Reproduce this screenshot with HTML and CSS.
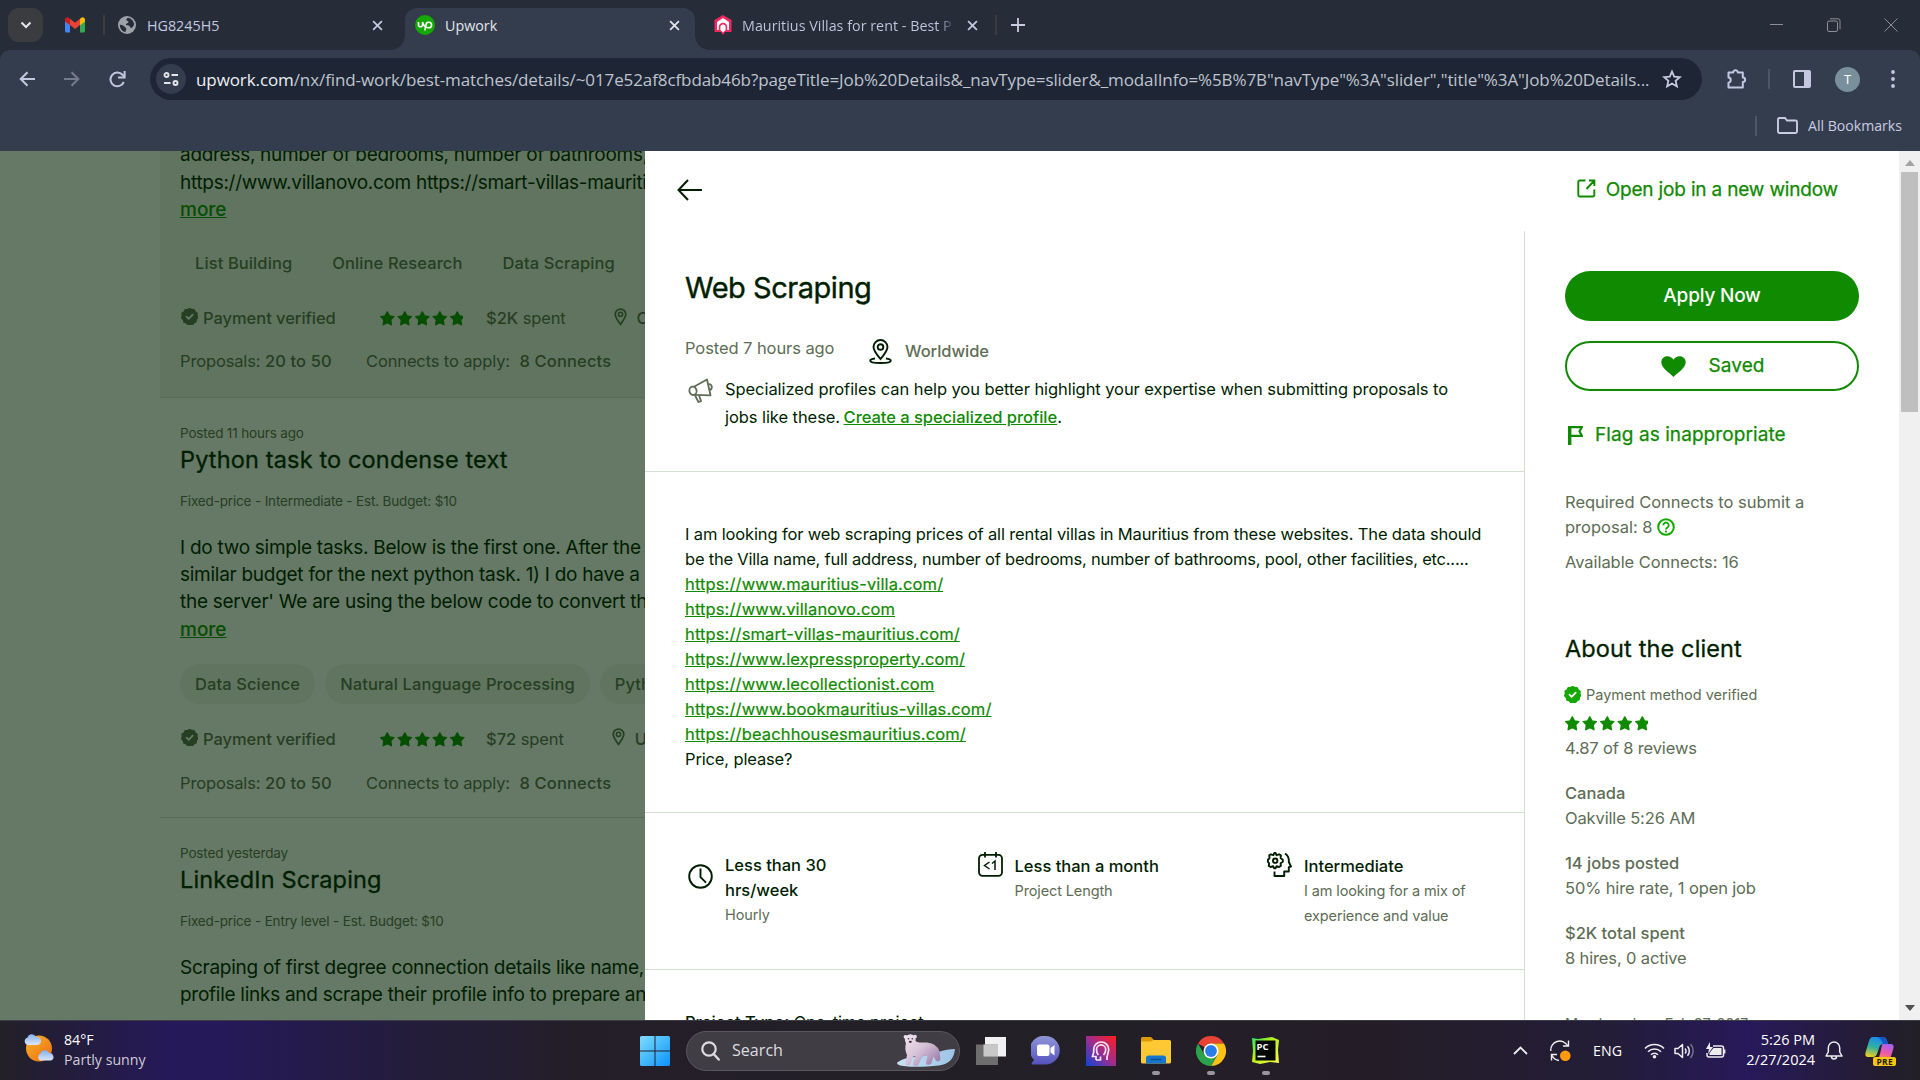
FILE: index.html
```html
<!DOCTYPE html>
<html lang="en">
<head>
<meta charset="utf-8">
<title>Upwork</title>
<link rel="stylesheet" href="styles.css">
</head>
<body>
<svg class="defs" width="0" height="0" aria-hidden="true">
  <symbol id="close" viewBox="0 0 10 10"><path d="M1 1l8 8M9 1l-8 8" fill="none" stroke="currentColor" stroke-width="1.6"/></symbol>
  <symbol id="stars" viewBox="0 0 85 15">
    <g fill="currentColor" stroke="currentColor" stroke-width="1.4" stroke-linejoin="round">
      <path id="star" d="M7.300.9l2.100 4 4.500.7-3.200 3.200.7 4.900-4.100-2-4.100 2 .7-4.900L.7 5.600l4.500-.7z"/>
      <use href="#star" x="17.500"/><use href="#star" x="35"/><use href="#star" x="52.500"/><use href="#star" x="70"/>
    </g>
  </symbol>
  <symbol id="badge" viewBox="0 0 16 16">
    <path d="M8 .4l2 1 2.300.1 1 2 1.900 1.400-.2 2.200.7 1.900-1.300 1.700-.2 2.300-2 .9-1.300 1.700-2.300-.2-2 .3-1.600-1.600-2.200-.7-.5-2.200L.6 9.300l.6-2.200-.2-2.300 2-1.300 1-2 2.300 0z" fill="currentColor" stroke="currentColor" stroke-width="1.200" stroke-linejoin="round"/>
    <path class="tick" d="M5.200 8.200l2 2 3.800-4" fill="none" stroke-width="1.700" stroke-linecap="round" stroke-linejoin="round"/>
  </symbol>
  <symbol id="pin" viewBox="0 0 12 17"><path d="M6 1a5 5 0 0 1 5 5c0 3-2.800 6.500-5 9.500C3.800 12.500 1 9 1 6a5 5 0 0 1 5-5z" fill="none" stroke="currentColor" stroke-width="1.600"/><circle cx="6" cy="6" r="2" fill="none" stroke="currentColor" stroke-width="1.500"/></symbol>
</svg>

<header class="browser">
  <div class="tabstrip">
    <button class="tab-search"><svg width="12" height="8" viewBox="0 0 12 8"><path d="M1.500 1.500L6 6l4.500-4.500" fill="none" stroke="#e3e5ea" stroke-width="2"/></svg></button>
    <svg class="gmail" width="20" height="16" viewBox="0 0 20 16"><path d="M0 3v11a1.500 1.500 0 0 0 1.500 1.500H5V7z" fill="#4285f4"/><path d="M20 3v11a1.500 1.500 0 0 1-1.500 1.500H15V7z" fill="#34a853"/><path d="M0 3.500V2.500A2.300 2.300 0 0 1 4 1l1 .8v6.500L0 4.500z" fill="#c5221f"/><path d="M20 3.500V2.500A2.300 2.300 0 0 0 16 1l-1 .8v6.500l5-3.800z" fill="#fbbc04"/><path d="M5 1.800l5 3.900 5-3.900v6.300l-5 3.900-5-3.900z" fill="#ea4335"/></svg>
    <span class="strip-sep first"></span>
    <div class="tab tab-plain">
      <svg width="18" height="18" viewBox="0 0 18 18"><circle cx="9" cy="9" r="9" fill="#9ea2a8"/><path d="M10 1.700c-1 .8-2 1-1.500 2.300s2 .5 2 2-2.500 1-2.500 2.500 2.500.5 3.500 1.500.5 2 1.500 2 2.500-1.500 3-3a7 7 0 0 0-6-7.300zM1.800 8.500c2 1 3.500.5 4.500 2s2.200 1 2 2.500-1 1.500-.8 3.200A7.300 7.300 0 0 1 1.800 8.500z" fill="#262c38"/></svg>
      <span class="tab-title">HG8245H5</span><svg class="x" width="11" height="11"><use href="#close"/></svg>
    </div>
    <div class="tab tab-active">
      <svg width="20" height="20" viewBox="0 0 20 20"><circle cx="10" cy="10" r="10" fill="#14a800"/><path d="M3.500 7v2.800a2 2 0 0 0 4 0V7M7.500 7c.8 2.800 2 4.500 3.300 5.200M9.800 15.500l1.200-5.700a2.800 2.800 0 1 1 2.700 3c-1 0-2-.4-2.800-1" fill="none" stroke="#fff" stroke-width="1.600"/></svg>
      <span class="tab-title">Upwork</span><svg class="x" width="11" height="11"><use href="#close"/></svg>
    </div>
    <div class="tab tab-last">
      <svg width="18" height="20" viewBox="0 0 18 20"><path d="M9 0l8.500 5V17H11l-2 3-2-3H.5V5z" fill="#f2275d"/><path d="M3 15V7l6-4 6 4v8h-1.800v-3a4.200 4.200 0 0 0-8.400 0v3z" fill="#fff"/><path d="M6.400 15v-3a2.600 2.600 0 0 1 5.200 0V15L9 17.500z" fill="#fff"/></svg>
      <span class="tab-title fade">Mauritius Villas for rent - Best P</span><svg class="x" width="11" height="11"><use href="#close"/></svg>
    </div>
    <span class="strip-sep last"></span>
    <svg class="plus" width="14" height="14" viewBox="0 0 14 14"><path d="M7 0v14M0 7h14" stroke="#c9cce0" stroke-width="1.800"/></svg>
    <div class="win-buttons">
      <svg width="14" height="14" viewBox="0 0 14 14"><path d="M0 6.500h13" stroke="#8b8f98"/></svg>
      <svg width="14" height="14" viewBox="0 0 14 14"><rect x=".5" y="3" width="10" height="10.500" rx="1.500" fill="none" stroke="#8b8f98"/><path d="M3 .8h8a2 2 0 0 1 2 2v8.500" fill="none" stroke="#8b8f98"/></svg>
      <svg width="14" height="14" viewBox="0 0 14 14"><path d="M.5.5l13 13M13.500.5l-13 13" stroke="#8b8f98"/></svg>
    </div>
  </div>

  <div class="toolbar">
    <svg class="nav-back" width="17" height="16" viewBox="0 0 17 16"><path d="M16 8H2M8.500 1.200L1.700 8l6.800 6.800" fill="none" stroke="#c3c8e0" stroke-width="2"/></svg>
    <svg class="nav-fwd" width="17" height="16" viewBox="0 0 17 16"><path d="M1 8h14M8.500 1.200L15.300 8l-6.800 6.800" fill="none" stroke="#747b8b" stroke-width="2"/></svg>
    <svg class="nav-reload" width="17" height="17" viewBox="0 0 17 17"><path d="M14.800 11A6.900 6.900 0 1 1 13.500 3.700L15.500 6" fill="none" stroke="#c3c8e0" stroke-width="2"/><path d="M15.600 0v6.600H9" fill="none" stroke="#c3c8e0" stroke-width="2"/></svg>
    <div class="omnibox">
      <span class="site-info"><svg width="16" height="14" viewBox="0 0 16 14"><g fill="none" stroke="#e3e5ea" stroke-width="1.900"><circle cx="3.500" cy="3" r="2"/><path d="M8.500 3H15M1 11h6.500"/><circle cx="12.500" cy="11" r="2"/></g></svg></span>
      <span class="url"><b>upwork.com</b>/nx/find-work/best-matches/details/~017e52af8cfbdab46b?pageTitle=Job%20Details&amp;_navType=slider&amp;_modalInfo=%5B%7B"navType"%3A"slider","title"%3A"Job%20Details...</span>
      <svg width="20" height="20" viewBox="0 0 20 20"><path d="M10 2.500l2.200 5.200 5.600.5-4.200 3.700 1.300 5.500-4.900-2.900-4.900 2.900 1.300-5.500L2.200 8.200l5.600-.5z" fill="none" stroke="#c9cce0" stroke-width="1.800"/></svg>
    </div>
    <svg class="ext" width="22" height="22" viewBox="0 0 22 22"><path d="M2.500 4.500h4.700a2.300 2.300 0 1 1 4.600 0h5v5a2.300 2.300 0 0 1 0 4.600v5.400h-14.300v-4.800c3-.2 3-5 0-5.200z" fill="none" stroke="#c3c8e0" stroke-width="2" stroke-linejoin="round"/></svg>
    <span class="tool-sep"></span>
    <svg class="panel-icon" width="18" height="18" viewBox="0 0 18 18"><rect x="1" y="1" width="16" height="16" rx="1" fill="none" stroke="#c3c8e0" stroke-width="2"/><path d="M11 1h6v16h-6z" fill="#c3c8e0"/></svg>
    <span class="avatar">T</span>
    <svg class="menu" width="4" height="18" viewBox="0 0 4 18"><g fill="#c3c8e0"><circle cx="2" cy="2" r="1.900"/><circle cx="2" cy="9" r="1.900"/><circle cx="2" cy="16" r="1.900"/></g></svg>
  </div>
  <div class="bookmarks">
    <span class="bm-sep"></span>
    <svg width="21" height="17" viewBox="0 0 21 17"><path d="M1 14.500V2.500A1.500 1.500 0 0 1 2.500 1H8l2 2.500h8.500A1.500 1.500 0 0 1 20 5v9.500a1.500 1.500 0 0 1-1.500 1.500h-16A1.500 1.500 0 0 1 1 14.500z" fill="none" stroke="#c9cce0" stroke-width="1.900"/></svg>
    <span>All Bookmarks</span>
  </div>
</header>

<div class="page">
  <section class="feed">
    <article class="job job-hover">
      <p class="job-text">address, number of bedrooms, number of bathrooms,<br>https://www.villanovo.com https://smart-villas-mauriti<br><a>more</a></p>
      <div class="tags"><span class="tag">List Building</span><span class="tag">Online Research</span><span class="tag">Data Scraping</span></div>
      <div class="client-row">
        <svg class="verified" width="17" height="17"><use href="#badge"/></svg><b class="pay">Payment verified</b>
        <span class="stars partial"><svg width="85" height="15"><use href="#stars"/></svg></span>
        <span class="spent"><b>$2K</b> spent</span>
        <svg class="pin" width="13" height="18"><use href="#pin"/></svg><b>C</b>
      </div>
      <div class="proposal-row"><span class="props">Proposals: <b>20 to 50</b></span><span>Connects to apply: <b class="conn">8 Connects</b></span></div>
    </article>
    <article class="job">
      <p class="posted">Posted 11 hours ago</p>
      <h2>Python task to condense text</h2>
      <p class="terms">Fixed-price - Intermediate - Est. Budget: $10</p>
      <p class="job-text">I do two simple tasks. Below is the first one. After the<br>similar budget for the next python task. 1) I do have a l<br>the server' We are using the below code to convert th<br><a>more</a></p>
      <div class="tags"><span class="tag">Data Science</span><span class="tag">Natural Language Processing</span><span class="tag">Python</span></div>
      <div class="client-row">
        <svg class="verified" width="17" height="17"><use href="#badge"/></svg><b class="pay">Payment verified</b>
        <span class="stars"><svg width="85" height="15"><use href="#stars"/></svg></span>
        <span class="spent"><b>$72</b> spent</span>
        <svg class="pin" width="13" height="18"><use href="#pin"/></svg><b>U</b>
      </div>
      <div class="proposal-row"><span class="props">Proposals: <b>20 to 50</b></span><span>Connects to apply: <b class="conn">8 Connects</b></span></div>
    </article>
    <article class="job">
      <p class="posted">Posted yesterday</p>
      <h2>LinkedIn Scraping</h2>
      <p class="terms">Fixed-price - Entry level - Est. Budget: $10</p>
      <p class="job-text">Scraping of first degree connection details like name,<br>profile links and scrape their profile info to prepare an</p>
    </article>
  </section>

  <section class="slider">
    <div class="slider-head">
      <svg class="back" width="25" height="22" viewBox="0 0 25 22"><path d="M25 11H1.500M11 1L1.500 11l9.500 10" fill="none" stroke="#001e00" stroke-width="2"/></svg>
      <a class="open-job"><svg width="19" height="19" viewBox="0 0 19 19"><path d="M8.500 1.500H2.500a1.200 1.200 0 0 0-1.200 1.200v13.600a1.200 1.200 0 0 0 1.200 1.200h13.600a1.200 1.200 0 0 0 1.200-1.200V10.500M12 1.500h5.400v5.600M17.400 1.500L9.500 10" fill="none" stroke="currentColor" stroke-width="1.900"/></svg>Open job in a new window</a>
    </div>
    <div class="slider-body">
      <main>
        <div class="sec sec-title">
          <h1>Web Scraping</h1>
          <div class="meta">
            <span class="ago">Posted 7 hours ago</span>
            <svg width="23" height="25" viewBox="0 0 23 25"><g fill="none" stroke="#001e00" stroke-width="1.900"><path d="M11.500 1a7 7 0 0 1 7 7c0 4-4.200 8.500-7 12-2.800-3.500-7-8-7-12a7 7 0 0 1 7-7z"/><circle cx="11.500" cy="8" r="2.800"/><path d="M6 19.500c-3 .4-4.800 1.200-4.800 2.200 0 1.500 4.300 2.300 10.300 2.300s10.300-.8 10.300-2.300c0-1-1.800-1.800-4.800-2.200"/></g></svg>
            <b>Worldwide</b>
          </div>
          <div class="notice">
            <svg width="25" height="25" viewBox="0 0 25 25"><g fill="none" stroke="#5e6d55" stroke-width="1.800" stroke-linejoin="round"><path d="M5.500 9L19 1.500l3.500 15.800-15.200-.5"/><ellipse cx="5" cy="12.800" rx="3.600" ry="4.200" transform="rotate(-12 5 12.800)"/><path d="M20.300 6.200c3.500-1.200 5 4.600 1.500 5.600M6.800 17l3.700 7 2.500-.9-2-5.800"/></g></svg>
            <p>Specialized profiles can help you better highlight your expertise when submitting proposals to<br>jobs like these. <a>Create a specialized profile</a>.</p>
          </div>
        </div>
        <div class="sec sec-desc">
          <p>I am looking for web scraping prices of all rental villas in Mauritius from these websites. The data should<br><span class="tight">be the Villa name, full address, number of bedrooms, number of bathrooms, pool, other facilities, etc.....</span><br><a>https://www.mauritius-villa.com/</a><br><a>https://www.villanovo.com</a><br><a>https://smart-villas-mauritius.com/</a><br><a>https://www.lexpressproperty.com/</a><br><a>https://www.lecollectionist.com</a><br><a>https://www.bookmauritius-villas.com/</a><br><a>https://beachhousesmauritius.com/</a><br>Price, please?</p>
        </div>
        <div class="sec sec-features">
          <div class="feature low">
            <svg width="25" height="25" viewBox="0 0 25 25"><circle cx="12.500" cy="12.500" r="11.300" fill="none" stroke="#001e00" stroke-width="1.900"/><path d="M12.500 4.500v8.700l5.500 5.500" fill="none" stroke="#001e00" stroke-width="1.900"/></svg>
            <div><b>Less than 30<br>hrs/week</b><small>Hourly</small></div>
          </div>
          <div class="feature">
            <svg width="25" height="25" viewBox="0 0 25 25"><g fill="none" stroke="#001e00" stroke-width="1.800"><rect x="1" y="2.800" width="23" height="21" rx="3.500"/><path d="M7 0v5.500M18 0v5.500"/><path d="M11.500 10L6.500 13.500l5 3.500M14 11.500l3-2.500v9" stroke-width="1.500"/></g></svg>
            <div><b>Less than a month</b><small>Project Length</small></div>
          </div>
          <div class="feature">
            <svg width="25" height="25" viewBox="0 0 25 25"><g fill="none" stroke="#001e00" stroke-width="1.900" stroke-linejoin="round"><path d="M8.500 1l1 2.200 2.500-.9 1.900 1.100-.3 2.600 2.200 1.700v2l-2.200 1.600.3 2.600-1.900 1.100-2.500-.9-1 2.200H7.200l-1-2.200-2.500.9-1.900-1.100.3-2.600L.9 9.700v-2l1.700-1.600-.4-2.700L4 2.300l2.400.9L7.300 1z"/><circle cx="8.200" cy="8.700" r="2.200"/><path d="M18 1.500c3 2 4.200 5 3.800 8.500l2.200 4.500-2.200.7v4.300h-4.600V24H7.500v-4.500"/></g></svg>
            <div><b>Intermediate</b><small>I am looking for a mix of<br>experience and value</small></div>
          </div>
        </div>
        <div class="sec sec-type"><b>Project Type:</b> One-time project</div>
      </main>
      <aside>
        <button class="btn btn-apply">Apply Now</button>
        <button class="btn btn-saved"><svg width="25" height="21" viewBox="0 0 25 21"><path d="M12.500 21C9 17 .3 12.500.3 6.300.3 2.500 3 .2 6.300.2c2.600 0 4.900 1.300 6.200 3.600C13.800 1.500 16.100.2 18.700.2c3.300 0 6 2.300 6 6.100C24.700 12.500 16 17 12.500 21z" fill="#108a00"/></svg>Saved</button>
        <a class="flag"><svg width="15" height="19" viewBox="0 0 15 19"><path d="M1.700 19V0" stroke="currentColor" stroke-width="3.400"/><path d="M1 1.200h12.800l-2.300 4.100L13.800 9.800H1" fill="none" stroke="currentColor" stroke-width="2.200"/></svg>Flag as inappropriate</a>
        <p class="required">Required Connects to submit a<br>proposal: 8 <svg width="18" height="18" viewBox="0 0 18 18"><circle cx="9" cy="9" r="7.800" fill="none" stroke="#14a800" stroke-width="2"/><path d="M6.300 7.300a2.700 2.700 0 1 1 4.200 2.200c-.9.600-1.500 1-1.500 2" fill="none" stroke="#14a800" stroke-width="1.800"/><circle cx="9" cy="13.600" r="1.100" fill="#14a800"/></svg></p>
        <p class="available">Available Connects: 16</p>
        <h3>About the client</h3>
        <div class="method"><svg width="17" height="17"><use href="#badge"/></svg>Payment method verified</div>
        <span class="stars partial"><svg width="85" height="15"><use href="#stars"/></svg></span>
        <p class="reviews">4.87 of 8 reviews</p>
        <p class="stat"><b>Canada</b><br>Oakville 5:26 AM</p>
        <p class="stat"><b>14 jobs posted</b><br>50% hire rate, 1 open job</p>
        <p class="stat"><b>$2K total spent</b><br>8 hires, 0 active</p>
        <p class="since">Member since Feb 27, 2017</p>
      </aside>
    </div>
  </section>
  <div class="scrollbar"><i class="up"></i><i class="thumb"></i><i class="down"></i></div>
</div>

<footer class="taskbar">
  <div class="weather">
    <svg width="32" height="30" viewBox="0 0 32 30"><defs><linearGradient id="sun" x1="0" y1="0" x2="1" y2="1"><stop offset="0" stop-color="#f7b526"/><stop offset="1" stop-color="#ee6a12"/></linearGradient><linearGradient id="cloud" x1="0" y1="0" x2="0" y2="1"><stop offset="0" stop-color="#84b0f4"/><stop offset="1" stop-color="#dbe6fa"/></linearGradient></defs><circle cx="16" cy="15.500" r="13" fill="url(#sun)"/><path d="M4 12a4 4 0 0 1 .5-7.500A4.500 4.500 0 0 1 13 4a4 4 0 0 1 2 8z" fill="url(#cloud)"/><path d="M17 27.500a4 4 0 0 1 .5-7 4.500 4.500 0 0 1 8.500-.3 3.800 3.800 0 0 1 2 7.300z" fill="url(#cloud)"/></svg>
    <div><span>84°F</span><span class="dim">Partly sunny</span></div>
  </div>
  <svg class="start" width="30" height="30" viewBox="0 0 30 30"><defs><linearGradient id="win" x1="0" y1="0" x2="1" y2="1"><stop offset="0" stop-color="#7edcff"/><stop offset="1" stop-color="#0a94f8"/></linearGradient></defs><path d="M1.500 0h13v14.500H0v-13A1.500 1.500 0 0 1 1.500 0zM15.500 0h13A1.500 1.500 0 0 1 30 1.500v13H15.500zM0 15.500h14.500V30h-13A1.500 1.500 0 0 1 0 28.500zM15.500 15.500H30v13a1.500 1.500 0 0 1-1.500 1.500h-13z" fill="url(#win)"/></svg>
  <div class="search">
    <svg width="19" height="20" viewBox="0 0 19 20"><circle cx="8" cy="8" r="6.700" fill="none" stroke="#dcdce0" stroke-width="2.200"/><path d="M12.700 13l5 5.500" stroke="#dcdce0" stroke-width="2.400" stroke-linecap="round"/></svg>
    <span>Search</span>
    <svg class="bear" width="60" height="34" viewBox="0 0 60 34"><defs><linearGradient id="ice" x1="0" y1="0" x2="1" y2="0"><stop offset="0" stop-color="#c8e2f4"/><stop offset="1" stop-color="#9cc4e6"/></linearGradient><linearGradient id="fur" gradientUnits="userSpaceOnUse" x1="8" y1="0" x2="38" y2="32"><stop offset="0" stop-color="#f3e6ee"/><stop offset=".5" stop-color="#d6c2d8"/><stop offset="1" stop-color="#9a7ba8"/></linearGradient></defs><path d="M1 28c5-4 15-5 26-6 12-3 20-7 31-7-1 10-6 15-16 16.500-14 1.500-34 2-40-.5-2-.8-2.500-2-1-3z" fill="url(#ice)"/><g fill="url(#fur)"><circle cx="8.500" cy="2.800" r="1.900"/><circle cx="18" cy="2.600" r="1.900"/><ellipse cx="13.300" cy="5.800" rx="5.400" ry="5.600"/><path d="M9 9c-1 4-1 8 1 12l-1.500 8.500c-.3 2.500 5 2.500 5.500 0L15.500 23l3-1-2.500 8c-.5 2.500 5 2.500 5.700.3L25.500 22l5-.3-1.500 7.500c0 2.200 5 2.200 5.500-.2l2-6.500 2.500 4c1 1.500 4.500.8 4.300-1.500-.2-3.500 0-7-2-10.500-3-4.500-9-6.500-15-6-3 .3-5.500 0-8-1.500z"/></g><g fill="#3b2c40"><circle cx="11.500" cy="4.700" r=".8"/><circle cx="15.300" cy="4.700" r=".8"/><ellipse cx="13.300" cy="7.800" rx="1.500" ry="1.100"/></g></svg>
  </div>
  <div class="apps">
    <div class="app"><svg width="30" height="28" viewBox="0 0 30 28"><path d="M9 0h21v19.500H9z" fill="#f1f1f1"/><path d="M0 7.500h22V28H0z" fill="#777" opacity=".9"/><path d="M7.500 7.500H22v12H7.500z" fill="#c8c8c8"/></svg></div>
    <div class="app"><svg width="29" height="29" viewBox="0 0 29 29"><defs><linearGradient id="chat" x1="0" y1="0" x2="0" y2="1"><stop offset="0" stop-color="#8f95d6"/><stop offset="1" stop-color="#5552c0"/></linearGradient></defs><path d="M14.500 0a14 14 0 0 1 0 28.500H1.500c-1.500 0-1-1.500 0-2.500l1.500-2A14 14 0 0 1 14.500 0z" fill="url(#chat)"/><rect x="6" y="8.500" width="12.500" height="11.500" rx="2" fill="#fff"/><path d="M19.500 12l4-3v10.500l-4-3z" fill="#fff"/></svg></div>
    <div class="app"><svg width="30" height="30" viewBox="0 0 30 30"><defs><linearGradient id="head" x1="0" y1="1" x2="1" y2="0"><stop offset="0" stop-color="#0a46d8"/><stop offset=".5" stop-color="#a02c8c"/><stop offset="1" stop-color="#ff1e1e"/></linearGradient></defs><path d="M0 0h30v30H0z" fill="url(#head)"/><g fill="none" stroke="#f8e4f4" stroke-width="1.700"><path d="M10 24h4.500v-3.500M10 24v-3.500H6.500l1.200-4v-3a7.500 7.500 0 0 1 15 0c0 3.500-2.200 5-1.700 10.500"/><path d="M12.300 19c-1.300-1.500-1.800-3-1.800-5.500a4.600 4.600 0 0 1 9.200 0c0 2.500-.7 4-2.200 5.500"/></g></svg></div>
    <div class="app running"><svg width="30" height="27" viewBox="0 0 30 27"><path d="M0 1.500A1.500 1.500 0 0 1 1.500 0h8.500l3.500 3.500H28A2 2 0 0 1 30 5.500V10H0z" fill="#dd9a06"/><path d="M0 4.500h10l2.500-1.500H28.500A1.500 1.500 0 0 1 30 4.500v20.500a1.500 1.500 0 0 1-1.500 1.500h-27A1.500 1.500 0 0 1 0 25z" fill="#fcc934"/><path d="M5 26.500V21a2.500 2.500 0 0 1 2.500-2.500h15A2.500 2.500 0 0 1 25 21v5.500z" fill="#1377cf"/><path d="M9.500 22.500h11" stroke="#0c4f93" stroke-width="1.500"/></svg></div>
    <div class="app running"><svg width="30" height="30" viewBox="0 0 30 30"><path d="M15 15L2 7.500A15 15 0 0 1 28 7.500H15z" fill="#ea4335"/><path d="M15 7.500h13A15 15 0 0 1 15 30l6.500-11.300z" fill="#fbc116"/><path d="M2 7.500A15 15 0 0 0 15 30l6.500-11.300H8.500z" fill="#2ba24c"/><circle cx="15" cy="15" r="7.500" fill="#fff"/><circle cx="15" cy="15" r="5.900" fill="#2a7de9"/></svg></div>
    <div class="app running"><svg width="27" height="27" viewBox="0 0 27 27"><defs><linearGradient id="pc" x1="0" y1="0" x2="1" y2="1"><stop offset="0" stop-color="#21e56d"/><stop offset=".4" stop-color="#b6f01c"/><stop offset="1" stop-color="#fcf84a"/></linearGradient></defs><path d="M0 1l6 1L20 0l7 3-1 10 1 13-9-1-10 2-8-2 1-11z" fill="url(#pc)"/><path d="M3.500 3.500h20v20h-20z" fill="#040804"/><path d="M5.500 19.500h8" stroke="#fff" stroke-width="1.600"/><text x="4.500" y="13" class="pc-label">PC</text></svg></div>
  </div>
  <div class="tray">
    <svg class="t-chev" width="15" height="9" viewBox="0 0 15 9"><path d="M1 8l6.500-6.500L14 8" fill="none" stroke="#eee" stroke-width="1.800"/></svg>
    <svg class="t-sync" width="21" height="22" viewBox="0 0 21 22"><path d="M.8 11A9 9 0 0 1 17.500 5.500M18.500.5v5.500h-5.500M9 20.500A9 9 0 0 1 2 15.500M1.500 20.500v-6h5.500" fill="none" stroke="#eee" stroke-width="1.400"/><circle cx="15.300" cy="15.800" r="5.300" fill="#ff9a0a"/></svg>
    <span class="t-lang">ENG</span>
    <svg class="t-wifi" width="21" height="16" viewBox="0 0 21 16"><g fill="none" stroke="#eee" stroke-width="1.600"><path d="M1 5.500a13.400 13.400 0 0 1 19 0M4 8.700a9.200 9.200 0 0 1 13 0M7 11.800a5 5 0 0 1 7 0"/></g><circle cx="10.500" cy="13.800" r="1.800" fill="#eee"/></svg>
    <svg class="t-sound" width="21" height="16" viewBox="0 0 21 16"><g fill="none" stroke="#eee" stroke-width="1.500"><path d="M1 5.500h3L8.500 1.500v13L4 10.500H1z" stroke-linejoin="round"/><path d="M11 5.500a3.500 3.500 0 0 1 0 5M13.500 3.300a7 7 0 0 1 0 9.400"/><path d="M16.500 1a10.500 10.500 0 0 1 0 14" opacity=".4"/></g></svg>
    <svg class="t-batt" width="21" height="17" viewBox="0 0 21 17"><path d="M8 4h8.500a2 2 0 0 1 2 2v7a2 2 0 0 1-2 2H4a2 2 0 0 1-2-2v-2" fill="none" stroke="#eee" stroke-width="1.500"/><path d="M8.500 6h8v7H4.500v-2z" fill="#eee"/><path d="M19.500 7.500v4" stroke="#eee" stroke-width="1.800"/><path d="M5 0L1 7h3l-1 5 5-7H5z" fill="#eee"/></svg>
    <div class="clock"><span>5:26 PM</span><span>2/27/2024</span></div>
    <svg class="t-bell" width="18" height="19" viewBox="0 0 18 19"><path d="M9 1a5.700 5.700 0 0 1 5.700 5.700V11l2.300 4H1l2.300-4V6.700A5.700 5.700 0 0 1 9 1zM6.500 15.500a2.500 2.500 0 0 0 5 0" fill="none" stroke="#eee" stroke-width="1.500" stroke-linejoin="round"/></svg>
    <div class="copilot">
      <svg width="30" height="28" viewBox="0 0 30 28"><defs><linearGradient id="cp1" x1=".5" y1="0" x2=".2" y2="1"><stop offset="0" stop-color="#1b8af0"/><stop offset=".5" stop-color="#2fb0a0"/><stop offset="1" stop-color="#f2d01c"/></linearGradient><linearGradient id="cp2" x1=".6" y1="0" x2=".3" y2="1"><stop offset="0" stop-color="#a860f0"/><stop offset=".6" stop-color="#ee5aa8"/><stop offset="1" stop-color="#fb8a4e"/></linearGradient></defs><path d="M8 0h10c3 0 4 3 5 7h-5c-2 0-3 1-4 4l-2 6c-1 2-2 3-4 3H3c-3 0-3-3-2-6l3-10c1-3 2-4 4-4z" fill="url(#cp1)"/><path d="M12 0h6c3 0 4 3 5 7h-5c-2-6-4-6-6-7z" fill="#1458c8"/><path d="M18 7h8c3 0 3 3 2 6l-3 9H12c2 0 2-2 3-5l1.500-7c.4-2 .5-3 1.500-3z" fill="url(#cp2)"/></svg>
      <span class="pre">PRE</span>
    </div>
  </div>
</footer>
</body>
</html>
```

FILE: styles.css
```css
* { box-sizing: border-box; margin: 0; padding: 0; }
html, body { width: 1920px; height: 1080px; overflow: hidden; }
body {
  display: flex;
  flex-direction: column;
  font-family: Inter, "Liberation Sans", sans-serif;
  font-size: 16.5px;
  line-height: 25px;
  letter-spacing: -0.14px;
  color: #001e00;
  background: #343d4e;
}
svg { display: block; flex: none; }
b, small { font-weight: 500; letter-spacing: 0; }
small { font-weight: 400; }
button { font: inherit; letter-spacing: inherit; border: 0; background: none; }
.defs { position: absolute; }
.tick { stroke: var(--tick, #fff); }

/* Browser chrome */
.browser {
  height: 151px;
  flex: none;
  font-family: "Open Sans", "Noto Sans", sans-serif;
  letter-spacing: 0;
  color: #c3c8e0;
  background: #262c38;
}
.tabstrip { display: flex; align-items: center; height: 50px; }
.tab-search {
  display: flex; align-items: center; justify-content: center;
  width: 35px; height: 34px; margin-left: 8px;
  border-radius: 11px; background: #3b3c40;
}
.gmail { margin-left: 22px; }
.strip-sep { width: 2px; height: 20px; background: #3b3c42; }
.strip-sep.first { margin-left: 18px; }
.tab { display: flex; align-items: center; font-size: 14.3px; }
.tab-title { white-space: nowrap; }
.tab .x { margin-left: auto; }
.tab-plain { width: 265px; margin-left: 13px; }
.tab-plain .tab-title { margin-left: 11px; }
.tab-active {
  position: relative;
  width: 290px; height: 42px;
  margin: 8px 0 0 22px; padding: 0 15px 8px 10px;
  border-radius: 12px 12px 0 0;
  background: #343d4e; color: #e3e5ea;
}
.tab-active::before, .tab-active::after {
  content: ""; position: absolute; bottom: 0; width: 14px; height: 14px;
}
.tab-active::before { left: -14px; background: radial-gradient(circle at 0 0, transparent 13.5px, #343d4e 14px); }
.tab-active::after { right: -14px; background: radial-gradient(circle at 100% 0, transparent 13.5px, #343d4e 14px); }
.tab-active .tab-title { margin-left: 10px; }
.tab-last { width: 264px; margin-left: 19px; }
.tab-last .tab-title { margin-left: 10px; letter-spacing: 0.02px; }
.fade {
  background: linear-gradient(90deg, #c3c8e0 94%, #50586a 99%);
  -webkit-background-clip: text; background-clip: text; color: transparent;
}
.strip-sep.last { margin-left: 17px; }
.plus { margin-left: 14px; }
.win-buttons { display: flex; gap: 43px; margin: 0 22px 0 auto; }

.toolbar {
  display: flex; align-items: center;
  height: 58px; border-radius: 10px 10px 0 0;
  background: #343d4e;
}
.nav-back { margin-left: 19px; }
.nav-fwd { margin-left: 27px; }
.nav-reload { margin-left: 29px; }
.omnibox {
  display: flex; align-items: center;
  width: 1552px; height: 42px; margin-left: 24px; padding: 0 20px 0 6px; flex: none;
  border-radius: 21px; background: #1e2635;
}
.site-info {
  display: flex; align-items: center; justify-content: center;
  width: 30px; height: 30px; border-radius: 50%; background: #343d4e;
}
.url {
  flex: 1; margin-left: 10px;
  font-size: 17px; letter-spacing: -0.096px; white-space: nowrap; color: #bfc3ce;
}
.url b { font-weight: 400; letter-spacing: inherit; color: #eceef4; }
.ext { margin-left: 24px; }
.tool-sep { width: 2px; height: 20px; margin-left: 20px; background: #4d5567; }
.panel-icon { margin-left: 23px; }
.avatar {
  width: 25px; height: 25px; margin-left: 24px;
  border-radius: 50%; background: #78909c; color: #fff;
  font-size: 13px; line-height: 25px; text-align: center;
}
.menu { margin-left: 31px; }
.bookmarks {
  display: flex; align-items: center; justify-content: flex-end;
  height: 43px; padding: 0 18px 8px 0;
  background: #343d4e; font-size: 14.1px; color: #c9cce0;
}
.bm-sep { width: 2px; height: 20px; margin-right: 20px; background: #4d5567; }
.bookmarks svg { margin-right: 10px; }

/* Page */
.page { display: flex; height: 869px; flex: none; overflow: hidden; background: #fff; }

.feed {
  width: 645px; padding-left: 160px; flex: none; overflow: hidden;
  background: #667866; color: #001e00; white-space: nowrap;
  --tick: #667866;
}
.job { padding: 25.5px 20px 21.5px; border-bottom: 1px solid #576b57; color: #263e22; }
.job-hover { display: flow-root; height: 247px; padding-top: 0; background: #617460; }
.posted, .terms { font-size: 13.5px; line-height: 18px; letter-spacing: -0.16px; }
.job h2 {
  margin: 3px 0 17.5px; font-size: 23.5px; line-height: 30px; font-weight: 400; letter-spacing: 0.15px;
  color: #001e00; -webkit-text-stroke: .3px #001e00;
}
.job-text { margin-top: 23.6px; font-size: 19px; line-height: 27.4px; letter-spacing: -0.27px; color: #001e00; }
.job-hover .job-text { margin-top: -9.6px; letter-spacing: -0.29px; }
.job-text a { font-weight: 500; letter-spacing: 0; text-decoration: underline; color: #064e00; }
.tags { display: flex; gap: 10px; margin: 20.8px 0 22.8px; }
.job-hover .tags { margin: 19.5px 0 23.3px; }
.tag {
  padding: 0 15px; height: 40px; line-height: 40px; border-radius: 20px;
  background: #617460; font-weight: 500; letter-spacing: 0.1px; flex: none;
}
.client-row { display: flex; align-items: center; height: 25px; }
.verified { margin: -4px 5px 0 1px; }
.pay { width: 132px; letter-spacing: -0.04px; }
.client-row .stars { margin-left: 45px; color: #064e00; }
.stars { display: block; width: 85px; height: 15px; overflow: hidden; flex: none; }
.client-row .partial, .partial { width: 83px; }
.spent { margin-left: 21px; }
.client-row .partial + .spent { margin-left: 23px; }
.pin { margin: -4px 10px 0 48px; }
.proposal-row { display: flex; margin-top: 19px; }
.job-hover .proposal-row { margin-top: 18px; }
.proposal-row b { letter-spacing: 0.12px; }
.props { width: 186px; }
.proposal-row .conn { margin-left: 5px; letter-spacing: 0.16px; }

.slider { display: flex; flex-direction: column; width: 1254px; flex: none; }
.slider a { color: #108a00; }
.slider-head { display: flex; justify-content: space-between; height: 80px; flex: none; padding: 28px 61px 0 32px; }
.open-job { display: flex; margin-top: -2px; font-size: 19px; letter-spacing: -0.17px; -webkit-text-stroke: .25px #108a00; }
.open-job svg { margin: 2px 10px 0 0; }
.slider-body { display: flex; flex: 1; }
main { width: 879px; flex: none; }
.sec { padding-left: 40px; border-bottom: 1px solid #d5e0d5; }
.sec-title { height: 241px; padding-top: 39px; }
h1 { font-size: 29px; line-height: 36px; font-weight: 400; letter-spacing: -0.47px; -webkit-text-stroke: .4px #001e00; }
.meta { display: flex; height: 28px; margin-top: 29.5px; color: #5e6d55; }
.ago { width: 184px; letter-spacing: -0.08px; }
.meta svg { margin-top: 3px; }
.meta b { margin: 3px 0 0 13px; letter-spacing: -0.05px; }
.notice { display: flex; margin-top: 11.5px; line-height: 28px; }
.notice svg { margin: 3px 12px 0 3px; }
.notice p { letter-spacing: -0.07px; }
.notice a { margin-left: -1px; font-weight: 500; letter-spacing: -0.04px; text-decoration: underline; }
.sec-desc a { letter-spacing: 0.13px; text-decoration: underline; -webkit-text-stroke: .2px #108a00; }
.tight { letter-spacing: -0.21px; }
.sec-desc { height: 341px; padding-top: 49.5px; }
.sec-features { display: flex; height: 157px; padding: 39px 0 0 43px; }
.feature { display: flex; width: 289.5px; flex: none; }
.feature > div { margin: 1.5px 0 0 12px; }
.feature.low > div { margin-top: .5px; }
.feature.low svg { margin-top: 12px; }
.feature b { display: block; letter-spacing: 0; }
small { display: block; margin-top: -1px; font-size: 14.5px; letter-spacing: -0.12px; color: #5e6d55; }
.sec-type { padding-top: 39.5px; border: 0; white-space: nowrap; }

aside { width: 375px; padding: 40px 40px 0; border-left: 1px solid #d5e0d5; color: #5e6d55; }
.btn {
  display: flex; align-items: center; justify-content: center;
  width: 294px; height: 50px; border-radius: 25px;
  font-size: 19px; font-weight: 500; letter-spacing: -0.2px;
}
.btn-apply { padding-bottom: 2px; background: #108a00; color: #fff; }
.btn-saved {
  margin-top: 20px; padding: 0 0 2px 2px; border: 2px solid #108a00; background: #fff; color: #108a00;
  font-weight: 400; letter-spacing: 0.1px; -webkit-text-stroke: .25px #108a00;
}
.btn-saved svg { margin: 3px 22px 0 0; }
.flag { display: flex; margin-top: 30.5px; padding-left: 3px; font-size: 19px; letter-spacing: 0.08px; -webkit-text-stroke: .25px #108a00; }
.flag svg { margin: 4px 12px 0 0; }
.required { margin-top: 43.5px; letter-spacing: 0; white-space: nowrap; }
.required svg { display: inline-block; vertical-align: -3px; }
.available { margin-top: 9.5px; letter-spacing: -0.06px; }
h3 { margin-top: 59px; font-size: 23.5px; line-height: 30px; font-weight: 400; letter-spacing: 0.13px; color: #001e00; -webkit-text-stroke: .3px #001e00; }
.method { display: flex; align-items: center; margin-top: 21.4px; font-size: 14.5px; line-height: 20px; letter-spacing: -0.02px; }
.method svg { margin: 0 5px 0 -1px; color: #14a800; }
aside .stars { margin: 11px 0 5.3px; color: #108a00; }
.stat { margin-top: 20px; }
.since { margin-top: 39.5px; font-size: 14.5px; white-space: nowrap; }

.scrollbar { display: flex; flex-direction: column; align-items: center; width: 21px; background: #f0f0f0; }
.scrollbar i { width: 0; height: 0; border: 5px solid transparent; border-top-width: 0; }
.scrollbar .up { margin-top: 9px; border-bottom: 6px solid #a3a3a3; }
.scrollbar .thumb { width: 17px; height: 240px; margin-top: 6px; border: 0; background: #bfbfbf; }
.scrollbar .down { margin: auto 0 9px; border-top: 6px solid #505050; border-bottom-width: 0; }

/* Taskbar */
.taskbar {
  display: flex; align-items: center;
  height: 60px; flex: none; border-top: 1px solid #3c3c48;
  font-family: "Open Sans", "Noto Sans", sans-serif; font-size: 14.2px; line-height: 20px; letter-spacing: 0;
  color: #fff;
  background: linear-gradient(90deg, #222028 0, #25195a 9%, #25195a 11%, #231d3c 21%, #241e29 30%, #222026 50%, #241d28 72%, #231d38 84%, #27195a 91%, #231d30 98%, #221f28 100%);
}
.weather { display: flex; align-items: center; width: 640px; padding: 0 0 2px 23px; }
.weather svg { margin-right: 9px; margin-bottom: 3px; }
.weather span, .clock span { display: block; }
.weather .dim { color: #cfcdd6; }
.search {
  display: flex; align-items: center;
  width: 274px; height: 40px; margin-left: 16px; padding: 0 2px 0 14px;
  border: 1px solid #5a565e; border-radius: 20px; background: #413d44;
  font-size: 16.1px; color: #dcdce0;
}
.search span { margin-left: 12px; padding-bottom: 1px; }
.bear { margin-left: auto; }
.apps { display: flex; height: 60px; margin-left: 3px; }
.app { position: relative; display: flex; align-items: center; justify-content: center; width: 55px; }
.running::after { content: ""; position: absolute; bottom: 6px; width: 8px; height: 4px; border-radius: 2px; background: #98969c; }
.pc-label { font: bold 9.5px "Open Sans", sans-serif; fill: #fff; }
.tray { display: flex; align-items: center; margin-left: auto; padding-right: 25px; }
.t-sync { margin-left: 22px; }
.t-lang { margin-left: 22px; }
.t-wifi { margin-left: 22px; }
.t-sound { margin-left: 9px; }
.t-batt { margin-left: 10px; }
.clock { margin: -2px 0 0 20px; width: 69px; text-align: right; white-space: nowrap; font-size: 14.5px; }
.t-bell { margin-left: 10px; }
.copilot { position: relative; margin-left: 22px; }
.pre {
  position: absolute; right: -1px; bottom: -1px;
  padding: 0 3px; border-radius: 2px; background: #fcc70a; color: #1a1a1a;
  font-size: 8.5px; font-weight: 700; line-height: 9px; letter-spacing: .3px;
}
```
